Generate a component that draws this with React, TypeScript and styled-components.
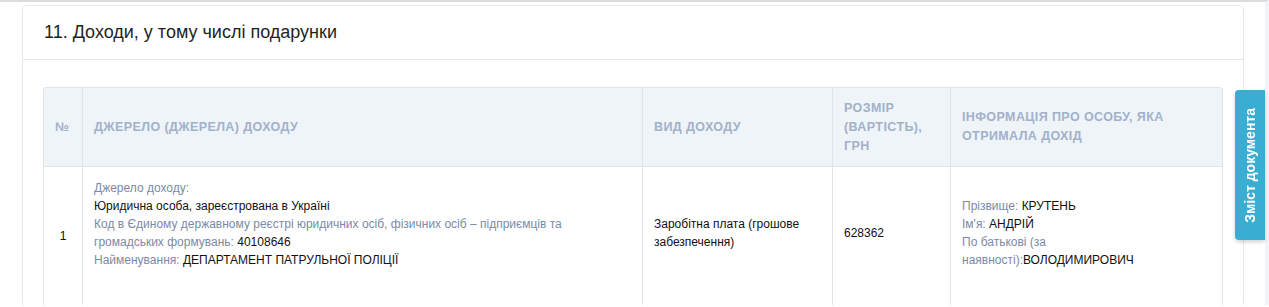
import * as React from 'react';
import styled, { createGlobalStyle } from 'styled-components';

const GlobalStyle = createGlobalStyle`
  html, body {
    margin: 0;
    padding: 0;
    background: #ffffff;
    font-family: "Liberation Sans", Arial, sans-serif;
    color: #222;
  }
`;

const Page = styled.div`
  border-top: 2px solid #dcdcdc;
  border-right: 4px solid #f3f4f6;
  padding: 3px 21px 0 22px;
  height: 305px;
  overflow: hidden;
  box-sizing: border-box;
`;

const Card = styled.section`
  border: 1px solid #e6eaf0;
  border-radius: 5px;
  background: #fff;
  box-shadow: 0 1px 2px rgba(0, 0, 0, 0.03);
`;

const CardHeader = styled.header`
  height: 53px;
  display: flex;
  align-items: center;
  padding: 0 21px;
  border-bottom: 1px solid #e3e6ea;
  font-size: 18px;
  color: #1f1f1f;
`;

const CardBody = styled.div`
  padding: 27px 21px 0 20px;
`;

const Table = styled.table`
  width: 1178px;
  border-collapse: separate;
  border-spacing: 0;
  table-layout: fixed;
  border: 1px solid #dfe4eb;
  border-bottom: none;
  border-radius: 4px 4px 0 0;
  font-size: 12px;
`;

const Th = styled.th<{ w: number }>`
  width: ${({ w }) => w}px;
  height: 79px;
  box-sizing: border-box;
  background: #eff4f9;
  color: #a2b1c9;
  font-weight: bold;
  font-size: 12.5px;
  letter-spacing: 0.4px;
  line-height: 19px;
  text-transform: uppercase;
  text-align: left;
  vertical-align: middle;
  padding: 0 11px;
  border-left: 1px solid #dfe4eb;
  border-bottom: 1px solid #dfe4eb;

  &:first-child {
    border-left: none;
    border-top-left-radius: 4px;
  }
  &:last-child {
    border-top-right-radius: 4px;
  }
`;

const Td = styled.td<{ top?: boolean }>`
  height: 139px;
  box-sizing: border-box;
  vertical-align: ${({ top }) => (top ? 'top' : 'middle')};
  padding: ${({ top }) => (top ? '12px 11px' : '0 11px 6px')};
  line-height: 18px;
  color: #111;
  border-left: 1px solid #dfe4eb;
  border-bottom: 1px solid #dfe4eb;

  &:first-child {
    border-left: none;
    text-align: center;
    padding: 0 6px;
  }
`;

const Label = styled.span`
  color: #7b8aa8;
`;

const Line = styled.div``;

const ContentsTab = styled.button`
  position: fixed;
  top: 90px;
  left: 1235px;
  width: 30px;
  height: 150px;
  border: none;
  border-radius: 4px 0 0 4px;
  background: #3aaed2;
  box-shadow: 0 2px 4px rgba(0, 0, 0, 0.18);
  padding: 0;
  display: flex;
  align-items: center;
  justify-content: center;
  cursor: pointer;

  span {
    writing-mode: vertical-rl;
    transform: rotate(180deg);
    color: #fff;
    font-family: "Liberation Sans", Arial, sans-serif;
    font-weight: bold;
    font-size: 14px;
    white-space: nowrap;
  }
`;

const columns = [
  { title: '№', w: 38 },
  { title: 'Джерело (джерела) доходу', w: 560 },
  { title: 'Вид доходу', w: 190 },
  { title: 'Розмір (вартість), грн', w: 118 },
  { title: 'Інформація про особу, яка отримала дохід', w: 272 },
];

export default function App() {
  return (
    <>
      <GlobalStyle />
      <Page>
        <Card>
          <CardHeader>11. Доходи, у тому числі подарунки</CardHeader>
          <CardBody>
            <Table>
              <thead>
                <tr>
                  {columns.map((c) => (
                    <Th key={c.title} w={c.w}>
                      {c.title}
                    </Th>
                  ))}
                </tr>
              </thead>
              <tbody>
                <tr>
                  <Td>1</Td>
                  <Td top>
                    <Line><Label>Джерело доходу:</Label></Line>
                    <Line>Юридична особа, зареєстрована в Україні</Line>
                    <Line>
                      <Label>
                        Код в Єдиному державному реєстрі юридичних осіб, фізичних осіб – підприємців та
                        громадських формувань:
                      </Label>{' '}
                      40108646
                    </Line>
                    <Line>
                      <Label>Найменування:</Label> ДЕПАРТАМЕНТ ПАТРУЛЬНОЇ ПОЛІЦІЇ
                    </Line>
                  </Td>
                  <Td>Заробітна плата (грошове забезпечення)</Td>
                  <Td>628362</Td>
                  <Td>
                    <Line>
                      <Label>Прізвище:</Label> КРУТЕНЬ
                    </Line>
                    <Line>
                      <Label>Ім'я:</Label> АНДРІЙ
                    </Line>
                    <Line>
                      <Label>По батькові (за наявності):</Label>ВОЛОДИМИРОВИЧ
                    </Line>
                  </Td>
                </tr>
              </tbody>
            </Table>
          </CardBody>
        </Card>
      </Page>
      <ContentsTab>
        <span>Зміст документа</span>
      </ContentsTab>
    </>
  );
}
